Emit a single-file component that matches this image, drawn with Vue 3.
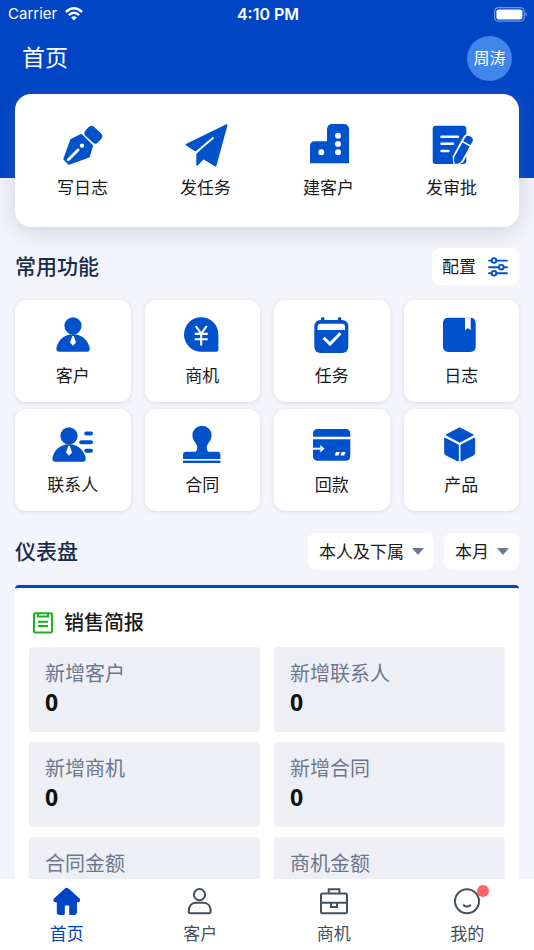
<script setup>
import { ref } from "vue";

const user = ref("周涛");
const active = ref("home");
const scope = ref("本人及下属");
const period = ref("本月");

const scopes = ["本人及下属", "仅本人", "仅下属"];
const periods = ["本月", "上月", "本周"];

const person = `<circle cx="22" cy="12.8" r="8.6"/>
  <path d="M5.4 35C7 27 13.5 21.3 22 21.3S37 27 38.7 35Q39 38.7 36 38.7H8.4Q5 38.7 5.4 35Z"/>
  <path fill="#fff" d="M21.3 23h1.5l2.2 6.5-3 3.2-3-3.2z"/>`;

// 业务图标，画布 44 x 44
const icons = {
  pen: `<rect x="-8.6" y="-6.2" width="17.2" height="12.4" rx="4" transform="translate(32.3 11.7) rotate(43)"/>
    <path stroke="currentColor" stroke-width="2" stroke-linejoin="round" d="M20.3 12L31 22.7L27.9 33.6L8 40.7L3.3 36L10.2 17Z"/>
    <path stroke="#fff" stroke-width="2.8" stroke-linecap="round" d="M7.3 36.7L17 27"/>
    <circle cx="21" cy="22.6" r="2.2" fill="#fff"/>`,
  plane: `<path stroke="currentColor" stroke-width="1.6" stroke-linejoin="round" d="M42.7 2L2.3 21.7L11.4 27.7L28.8 15L13.1 31.2V42L19.3 35.4L31.6 42.7Z"/>
    <path stroke="#fff" stroke-width="1.8" stroke-linecap="round" d="M11 30.3L29 15"/>`,
  building: `<path d="M3 40.3V23q0-4.7 4.7-4.7H20V6.5Q20 1 25.5 1h11Q42 1 42 6.5V40.3Z"/>
    <g fill="#fff"><circle cx="31" cy="12.7" r="3"/><circle cx="31" cy="21" r="3"/><circle cx="31" cy="29.3" r="3"/><circle cx="14.3" cy="29.3" r="3"/></g>`,
  form: `<rect x="2.7" y="2.7" width="33.6" height="38.3" rx="3"/>
    <path stroke="#fff" stroke-width="2.4" stroke-linecap="round" d="M11.5 13.7H28M11.5 20.7H23M11.5 28H18.5"/>
    <g transform="translate(40.5 13.5) rotate(29)">
      <path stroke="#fff" stroke-width="3.6" d="M-4.2 4Q-4.2 0 0 0T4.2 4V25.5L0 31.5L-4.2 25.5Z"/>
      <path d="M-4.2 4Q-4.2 0 0 0T4.2 4V25.5Q3.6 29.5 0 31.5Q-3.6 29.5-4.2 25.5Z"/>
      <path stroke="#fff" stroke-width="1.6" d="M-5 8.4H5"/>
    </g>`,
  person,
  yen: `<path d="M21.2 4.3A17.2 17.2 0 0 1 38.4 21.5V36.7Q38.4 38.7 36.4 38.7H21.2A17.2 17.2 0 0 1 21.2 4.3Z"/>
    <path fill="none" stroke="#fff" stroke-width="2.1" d="M15.7 13L21.2 20.7L26.7 13M14.7 20.9H27.7M14.7 26.2H27.7M21.2 20.5V32.4"/>`,
  task: `<rect x="4.3" y="7" width="34" height="33" rx="6"/>
    <path stroke="currentColor" stroke-width="3.4" stroke-linecap="round" d="M12.7 5.6V9M29.6 5.6V9"/>
    <path fill="#fff" d="M7.6 17V13.7q0-3 3-3H32q3 0 3 3V17Z"/>
    <path fill="none" stroke="#fff" stroke-width="3" d="M13.7 24.7L20 31L30.4 20.3"/>`,
  book: `<rect x="4" y="4.8" width="32.7" height="34.2" rx="5"/>
    <path fill="#fff" d="M26 4.5H31.7V17.3L28.9 14.9L26 17.3Z"/>`,
  contact: `<g transform="translate(-4 1)">${person}</g>
    <path stroke="currentColor" stroke-width="4" stroke-linecap="round" d="M35.2 11.5H40M30.2 20.3H40M35.2 28.8H40"/>`,
  stamp: `<path d="M22 3.8a9.6 9.6 0 0 1 9.6 9.6c0 4-2.5 6.5-4 9-1.2 2.2-1.5 5 .7 7.3H37.4q3 0 3 3V37H3V32.7q0-3 3-3H15.7c2.2-2.3 1.9-5.1.7-7.3-1.5-2.5-4-5-4-9A9.6 9.6 0 0 1 22 3.8Z"/>
    <rect x="3" y="38.6" width="37.4" height="2.4"/>`,
  card: `<rect x="3" y="7" width="37.3" height="31.7" rx="4.5"/>
    <path stroke="#fff" stroke-width="2.6" d="M3 16H40.5"/>
    <path stroke="#fff" stroke-width="2" d="M3 26.7H11"/>
    <path fill="#fff" d="M10.3 23L14.5 26.7L10.3 30.4ZM26 30H29.8L28.5 33.6H24.7ZM31.7 30H35.5L34.2 33.6H30.4Z"/>`,
  cube: `<g stroke="currentColor" stroke-width="1" stroke-linejoin="round"><path d="M20.7 5.8L34.3 12.9L20.7 20.2L7 12.9Z"/>
    <path d="M5.7 16L19.3 23V39.2L7 33Q5.7 32.3 5.7 31Z"/><path d="M35.7 16L22 23V39.2L34.4 33Q35.7 32.3 35.7 31Z"/></g>`,
};

// 底部导航图标，画布 28 x 28
const tabIcons = {
  home: `<path fill="currentColor" stroke="currentColor" stroke-linejoin="round" d="M12.3 2.4Q13.7 1.1 15.1 2.4L26.1 12.6Q26.3 14 25 14.2H23V25Q23 26.9 21.1 26.9H17.2V18.5Q17.2 17.4 16.1 17.4H11.9Q10.8 17.4 10.8 18.5V26.9H6.7Q4.8 26.9 4.8 25V14.2H2.5Q1.2 14 1.5 12.6Z"/>`,
  customer: `<circle cx="13.5" cy="7.7" r="5.6"/><path stroke-linejoin="round" d="M2.7 24.5C2.7 19 5.5 15.7 9.5 15.7H17.7C21.7 15.7 24.7 19 24.7 24.5Q24.7 26.3 22.7 26.3H4.7Q2.7 26.3 2.7 24.5Z"/>`,
  business: `<rect x="1" y="6.5" width="26" height="19.8" rx="1.5"/><path d="M8.7 6.5V2.2H19.4V6.5M1 15.7H27M11 15.7V20H17V15.7"/>`,
  mine: `<circle cx="14" cy="14.3" r="12"/><path stroke-linecap="round" d="M10.7 18.2Q14 20.8 17.3 18.2"/>`,
};

const quicks = [
  { icon: "pen", text: "写日志" },
  { icon: "plane", text: "发任务" },
  { icon: "building", text: "建客户" },
  { icon: "form", text: "发审批" },
];
const modules = [
  { icon: "person", text: "客户" },
  { icon: "yen", text: "商机" },
  { icon: "task", text: "任务" },
  { icon: "book", text: "日志" },
  { icon: "contact", text: "联系人" },
  { icon: "stamp", text: "合同" },
  { icon: "card", text: "回款" },
  { icon: "cube", text: "产品" },
];
const brief = ref([
  { label: "新增客户", value: 0 },
  { label: "新增联系人", value: 0 },
  { label: "新增商机", value: 0 },
  { label: "新增合同", value: 0 },
  { label: "合同金额", value: "" },
  { label: "商机金额", value: "" },
]);
const tabs = [
  { key: "home", text: "首页" },
  { key: "customer", text: "客户" },
  { key: "business", text: "商机" },
  { key: "mine", text: "我的", dot: true },
];
</script>

<template>
  <div class="page">
    <header class="top">
      <div class="status">
        <div class="carrier">
          <span>Carrier</span>
          <svg width="18" height="14" viewBox="0 0 18 14" fill="none" stroke="#fff" stroke-width="2.4">
            <path d="M.9 5Q9-2.4 17.1 5" />
            <path d="M3.8 8.2Q9 3.4 14.2 8.2" />
            <path fill="#fff" stroke="none" d="M6.1 10.5Q9 8 11.9 10.5L9 13.5Z" />
          </svg>
        </div>
        <span class="time">4:10 PM</span>
        <div class="battery">
          <svg width="34" height="15" viewBox="0 0 34 15">
            <rect x=".6" y=".6" width="29.6" height="13.6" rx="3.8" fill="none" stroke="#fff" stroke-opacity=".45" stroke-width="1.2" />
            <rect x="2.4" y="2.4" width="26" height="10" rx="2.2" fill="#fff" />
            <path d="M31.6 5Q34.2 7.4 31.6 9.8Z" fill="#fff" fill-opacity=".5" />
          </svg>
        </div>
      </div>
      <div class="bar">
        <h1>首页</h1>
        <button class="avatar">{{ user }}</button>
      </div>
    </header>

    <main class="content">
      <section class="hero">
        <div class="quick">
          <button v-for="q in quicks" :key="q.text">
            <svg class="icon" viewBox="0 0 44 44" v-html="icons[q.icon]"></svg>
            <span>{{ q.text }}</span>
          </button>
        </div>
      </section>

      <section class="block">
        <div class="head">
          <h2>常用功能</h2>
          <button class="config">
            <span>配置</span>
            <svg width="20" height="20" viewBox="0 0 20 20" fill="none" stroke="#0052cc" stroke-width="1.9">
              <path stroke-linecap="round" d="M1 3.6H3.5M8.5 3.6H19M1 10.2H10.8M15.8 10.2H19M1 16.3H3.5M8.5 16.3H19" />
              <circle cx="6" cy="3.6" r="2.3" />
              <circle cx="13.3" cy="10.2" r="2.3" />
              <circle cx="6" cy="16.3" r="2.3" />
            </svg>
          </button>
        </div>
        <div class="modules">
          <button v-for="m in modules" :key="m.text" class="tile">
            <svg class="icon" viewBox="0 0 44 44" v-html="icons[m.icon]"></svg>
            <span>{{ m.text }}</span>
          </button>
        </div>
      </section>

      <section class="block dashboard">
        <div class="head">
          <h2>仪表盘</h2>
          <div class="filters">
            <label class="picker">
              <select v-model="scope" aria-label="数据范围">
                <option v-for="s in scopes" :key="s">{{ s }}</option>
              </select>
              <svg width="12" height="7" viewBox="0 0 12 7"><path d="M0 0H12L6 7Z" /></svg>
            </label>
            <label class="picker">
              <select v-model="period" aria-label="时间">
                <option v-for="p in periods" :key="p">{{ p }}</option>
              </select>
              <svg width="12" height="7" viewBox="0 0 12 7"><path d="M0 0H12L6 7Z" /></svg>
            </label>
          </div>
        </div>
        <div class="panel">
          <h3>
            <svg width="20" height="22" viewBox="0 0 20 22" fill="none" stroke="#1bb51b" stroke-width="2">
              <rect x="1" y="1.2" width="18" height="19.4" rx="1" />
              <path d="M5 1.5V4.5H15V1.5M5 9.8H15M5 14H15" />
            </svg>
            <span>销售简报</span>
          </h3>
          <div class="brief">
            <div v-for="b in brief" :key="b.label" class="cell">
              <div class="label">{{ b.label }}</div>
              <div class="value">{{ b.value }}</div>
            </div>
          </div>
        </div>
      </section>
    </main>

    <nav class="tabs">
      <button
        v-for="t in tabs"
        :key="t.key"
        :class="{ active: active === t.key }"
        @click="active = t.key"
      >
        <span class="tab-icon">
          <svg width="28" height="28" viewBox="0 0 28 28" v-html="tabIcons[t.key]"></svg>
          <i v-if="t.dot" class="dot"></i>
        </span>
        <span>{{ t.text }}</span>
      </button>
    </nav>
  </div>
</template>

<style>
body {
  background: #f4f5fa;
}
</style>

<style scoped>
.page {
  display: flex;
  flex-direction: column;
  height: 100vh;
  font-family: Inter, "Noto Sans CJK SC", sans-serif;
  font-size: 17px;
  line-height: 24px;
  color: #1a1a1a;
  background: #f4f5fa;
}
button,
select {
  font: inherit;
  color: inherit;
  border: 0;
  margin: 0;
  padding: 0;
  background: none;
  cursor: pointer;
}
h1,
h2,
h3 {
  margin: 0;
}
svg {
  display: block;
}

.top {
  flex: none;
  color: #fff;
  background: #0045c4;
}
.status {
  display: grid;
  grid-template-columns: 1fr auto 1fr;
  align-items: center;
  height: 28px;
  padding: 0 6px 0 8px;
  font-size: 15px;
}
.carrier {
  display: flex;
  align-items: center;
  gap: 8px;
}
.time {
  font-size: 16px;
  font-weight: 600;
}
.battery {
  justify-self: end;
}
.bar {
  display: flex;
  align-items: center;
  justify-content: space-between;
  height: 60px;
  padding: 0 22px;
}
.bar h1 {
  font-size: 23px;
  font-weight: 400;
}
.avatar {
  width: 45px;
  height: 45px;
  border-radius: 50%;
  font-size: 16px;
  background: #4086ea;
}

.content {
  flex: 1;
  min-height: 0;
  overflow-y: auto;
  scrollbar-width: none;
}
.hero {
  padding: 6px 15px 0;
  background: linear-gradient(#0045c4 90px, transparent 90px);
}
.quick {
  display: grid;
  grid-template-columns: repeat(4, 1fr);
  padding: 29px 6px 27px;
  border-radius: 16px;
  background: #fff;
  box-shadow: 0 4px 24px rgba(110, 120, 165, 0.28);
}
.quick button,
.tile {
  display: flex;
  flex-direction: column;
  align-items: center;
  gap: 9px;
}
.icon {
  width: 44px;
  height: 44px;
  color: #0052cc;
  fill: currentColor;
}

.block {
  padding: 21px 15px 0;
}
.head {
  display: flex;
  align-items: center;
  justify-content: space-between;
  margin-bottom: 15px;
}
.head h2 {
  font-size: 21px;
  font-weight: 500;
  color: #172b4d;
}
.config {
  display: flex;
  align-items: center;
  gap: 12px;
  height: 37px;
  padding: 0 11px 0 10px;
  border-radius: 8px;
  background: #fff;
}
.modules {
  display: grid;
  grid-template-columns: repeat(4, 1fr);
  gap: 7px 14px;
}
.tile {
  gap: 7px;
  padding: 13px 0 14px;
  border-radius: 11px;
  background: #fff;
  box-shadow: 0 1px 4px rgba(60, 70, 110, 0.14);
}

.dashboard {
  padding-top: 22px;
}
.filters {
  display: flex;
  gap: 10px;
}
.picker {
  display: grid;
  align-items: center;
  border-radius: 8px;
  background: #fff;
}
.picker select,
.picker svg {
  grid-area: 1 / 1;
}
.picker select {
  appearance: none;
  height: 37px;
  padding: 0 30px 0 11px;
}
.picker svg {
  justify-self: end;
  margin-right: 10px;
  fill: #6b778c;
  pointer-events: none;
}
.panel {
  padding: 21px 14px;
  border-top: 3px solid #0045c4;
  border-radius: 4px 4px 0 0;
  background: #fff;
}
.panel h3 {
  display: flex;
  align-items: center;
  gap: 11px;
  padding: 0 4px;
  margin-bottom: 10px;
  font-size: 20px;
  font-weight: 500;
  line-height: 28px;
}
.brief {
  display: grid;
  grid-template-columns: 1fr 1fr;
  gap: 10px 14px;
}
.cell {
  padding: 13px 16px 16px;
  border-radius: 4px;
  background: #eeeff4;
}
.label {
  font-size: 20px;
  line-height: 28px;
  color: #6b778c;
}
.value {
  min-height: 28px;
  font-family: "Open Sans", sans-serif;
  font-size: 23px;
  font-weight: 700;
  line-height: 28px;
  color: #111;
}

.tabs {
  flex: none;
  display: grid;
  grid-template-columns: repeat(4, 1fr);
  height: 71px;
  background: #fff;
}
.tabs button {
  display: flex;
  flex-direction: column;
  align-items: center;
  gap: 7px;
  padding-top: 8px;
  color: #44505c;
}
.tabs .active {
  color: #0045c4;
}
.tab-icon {
  position: relative;
}
.tab-icon svg {
  fill: none;
  stroke: currentColor;
  stroke-width: 2;
}
.dot {
  position: absolute;
  top: -2px;
  right: -8px;
  width: 12px;
  height: 12px;
  border-radius: 50%;
  background: #ff6464;
}
</style>
